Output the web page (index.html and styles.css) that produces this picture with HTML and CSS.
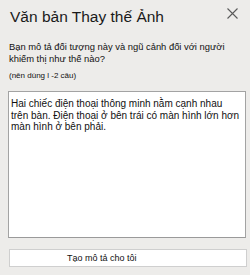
FILE: index.html
```html
<!DOCTYPE html>
<html lang="vi">
<head>
<meta charset="utf-8">
<link rel="stylesheet" href="styles.css">
</head>
<body>
<div class="pane">
  <div class="head">
    <h1 class="title">Văn bản Thay thế Ảnh</h1>
    <svg class="close" width="11" height="11" viewBox="0 0 11 11"><path d="M0.5 0.5L10.5 10.5M10.5 0.5L0.5 10.5" stroke="#5a5a5a" stroke-width="1.1" fill="none"/></svg>
  </div>
  <p class="desc">Bạn mô tả đối tượng này và ngũ cảnh đối với người khiếm thị như thế nào?</p>
  <p class="hint">(nên dùng l -2 câu)</p>
  <textarea class="alt" readonly>Hai chiếc điện thoại thông minh nằm cạnh nhau trên bàn. Điện thoại ở bên trái có màn hình lớn hơn màn hình ở bên phải.</textarea>
  <button class="gen">Tạo mô tả cho tôi</button>
</div>
</body>
</html>
```
FILE: styles.css
```css
html, body {
  margin: 0;
  padding: 0;
  background: #edecea;
}
body {
  width: 250px;
  height: 275px;
  overflow: hidden;
  font-family: "Liberation Sans", Arial, sans-serif;
  color: #111;
}
.pane {
  display: flex;
  flex-direction: column;
  padding: 7px 0 0 0;
}
.head {
  display: flex;
  justify-content: space-between;
  align-items: flex-start;
  padding: 0 12px 0 10px;
}
.title {
  margin: 0;
  font-size: 15.5px;
  line-height: 20px;
  font-weight: normal;
  color: #1a1a1a;
}
.close {
  margin-top: 1px;
}
.desc {
  margin: 14px 0 0 9px;
  width: 225px;
  font-size: 9.4px;
  line-height: 12px;
}
.hint {
  margin: 6px 0 0 9px;
  font-size: 8px;
  line-height: 10px;
}
.alt {
  margin: 10px 0 0 8px;
  width: 238px;
  height: 147px;
  box-sizing: border-box;
  border: 1px solid #a3a3a3;
  border-bottom-color: #9a9a9a;
  background: #fff;
  padding: 6px 4px 0 2px;
  font-family: "Liberation Sans", Arial, sans-serif;
  font-size: 10px;
  line-height: 11.7px;
  color: #111;
  resize: none;
  outline: none;
  overflow: hidden;
}
.gen {
  margin: 11px 0 0 9px;
  width: 238px;
  height: 18px;
  box-sizing: border-box;
  border: 1px solid #cfcfcf;
  background: #fff;
  padding: 0 0 0 57px;
  text-align: left;
  font-family: "Liberation Sans", Arial, sans-serif;
  font-size: 9px;
  color: #111;
}
```
